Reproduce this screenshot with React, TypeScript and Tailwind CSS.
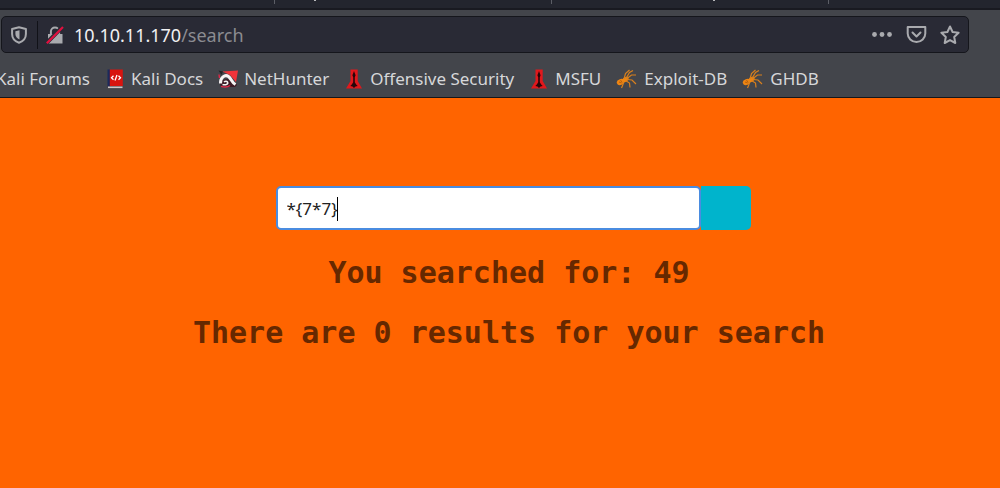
import type { ReactNode } from 'react';

function DocsIcon() {
  return (
    <svg className="h-5 w-5 shrink-0" viewBox="0 0 20 20" aria-hidden="true">
      <path d="M2.500 0.500h2.500v17h-2.500z" fill="#1b2a5c" />
      <path d="M4.800 0.500h13V17h-13z" fill="#d8140f" />
      <path d="M3 17.500h14.500v1.600H3z" fill="#cfc4c4" />
      <path d="M8.500 6.800 6.500 8.800l2 2M13.500 6.800l2 2-2 2M12 6 10 11.500" fill="none" stroke="#fff" strokeWidth="1.300" />
    </svg>
  );
}

function NetHunterIcon() {
  return (
    <svg className="h-5 w-5 shrink-0" viewBox="0 0 20 20" aria-hidden="true">
      <path d="M0.500 1.500 5 2.500 3.500 6z" fill="#222327" />
      <path d="M1 12 3 18h14l2-2-3-4-7-2z" fill="#3b1b24" />
      <path d="M4.500 2.500 20 1.500 18 13 12 6z" fill="#f0343a" />
      <path d="M2.500 14.500C2 8.500 7 5 10.500 7.500c3 2.300 3 6 7 8" fill="none" stroke="#f7f4f4" strokeWidth="3" />
      <path d="M4.500 15.500c3.500 1 6-.5 5-2.500-.8-1.300-2.500-1-3.500 0" fill="none" stroke="#f7f4f4" strokeWidth="1.500" />
      <path d="M3 17.300c3 1 7 .7 9-.8M1 5.500 1.500 9" fill="none" stroke="#e02848" strokeWidth="1.400" />
    </svg>
  );
}

function OffsecIcon() {
  return (
    <svg className="h-5 w-5 shrink-0" viewBox="0 0 20 20" aria-hidden="true">
      <path d="M6.500 0.500h7.200v11.500L18 19.500H2l4.500-7.500z" fill="#e0181c" />
      <path d="M10 2 10.700 4l.9 2.200-.8 2v5l1.400 2.300 1.500 1.500-2.200.5L10 19l-1.500-1.500-2.200-.5 1.500-1.500 1.400-2.300v-5l-.8-2L9.300 4z" fill="#260609" />
    </svg>
  );
}

function AntIcon() {
  return (
    <svg className="h-5 w-[22px] shrink-0" viewBox="0 0 22 20" aria-hidden="true">
      <g fill="#ee8512">
        <ellipse cx="4.700" cy="13" rx="4" ry="3" transform="rotate(-18 4.700 13)" />
        <ellipse cx="9.500" cy="10.500" rx="3.300" ry="2.200" transform="rotate(-30 9.500 10.500)" />
      </g>
      <path d="M8 10 9.500 4.500l4-3.500M10 9.500l3.500-6L17 1.500M11 9.500l4.500-3.500 4.500 0M11 10.500l5 .5 4 4M9.500 11.500l4 2.500 .5 4.500M7 12.500v3l-1.500 3.500" fill="none" stroke="#d9801d" strokeWidth="1.200" />
      <path d="M3 13l2.500 1M4.500 11l1.500 2.500" stroke="#9c4d0b" strokeWidth=".7" />
    </svg>
  );
}

function Bookmark({ icon, children }: { icon?: ReactNode; children: ReactNode }) {
  return (
    <a href="#" className="flex shrink-0 items-center gap-[6px] whitespace-nowrap">
      {icon}
      {children}
    </a>
  );
}

function TabStrip() {
  return (
    <div className="flex h-[10px] items-start overflow-hidden border-b-2 border-[#191a21] bg-[#23252e]">
      <div className="h-1 w-[275px] shrink-0 border-r border-[#5c5e66]" />
      <div className="h-1 w-[277px] shrink-0 border-r border-[#5c5e66] pl-[39px]">
        <div className="h-px w-[2px] bg-[#b8b9bb]" />
      </div>
      <div className="h-1 w-[277px] shrink-0 border-r border-[#5c5e66] pl-[161px]">
        <div className="h-px w-[2px] bg-[#b8b9bb]" />
      </div>
    </div>
  );
}

function AddressBar() {
  return (
    <div className="mr-[31px] flex h-[37px] items-center rounded-[5px] border border-[#15161c] bg-[#292a35] text-[#a9aaae]">
      <button type="button" aria-label="Tracking protection" className="ml-2">
        <svg className="h-[18px] w-[18px]" viewBox="0 0 18 18" aria-hidden="true">
          <path d="M9 1.300 15.900 3v5c0 4-2.500 7.200-6.900 8.700C4.600 15.200 2.100 12 2.100 8V3z" fill="none" stroke="currentColor" strokeWidth="2" strokeLinejoin="round" />
          <path d="M9.500 4.300v9.300C7 12.500 5.400 10.500 5.400 8V5.200z" fill="currentColor" />
        </svg>
      </button>
      <span className="ml-[9px] h-7 w-px bg-[#111218]" />
      <button type="button" aria-label="Connection is not secure" className="ml-2">
        <svg className="h-[18px] w-[18px]" viewBox="0 0 18 18" aria-hidden="true">
          <path d="M4.900 9V5.500a4.100 4.100 0 0 1 8.200 0V9" fill="none" stroke="currentColor" strokeWidth="2" />
          <path d="M2 8h14.500v9.500H2z" fill="currentColor" />
          <path d="M.8 16.800 16.500.8" stroke="#292a35" strokeWidth="4" />
          <path d="M.8 17.200 17 1" stroke="#e2103f" strokeWidth="2.200" />
        </svg>
      </button>
      <div
        role="textbox"
        aria-label="Address"
        contentEditable
        suppressContentEditableWarning
        className="ml-[10px] min-w-0 flex-1 whitespace-nowrap text-[18px] leading-6 text-[#8b8c91] outline-none"
      >
        <span className="text-[#f0f0f2]">10.10.11.170</span>/search
      </div>
      <div className="mr-2 flex items-center gap-[13px]">
        <button type="button" aria-label="Page actions">
          <svg className="h-5 w-[22px]" viewBox="0 0 22 20" fill="currentColor" aria-hidden="true">
            <circle cx="3.500" cy="9.500" r="2.400" />
            <circle cx="11" cy="9.500" r="2.400" />
            <circle cx="18.500" cy="9.500" r="2.400" />
          </svg>
        </button>
        <button type="button" aria-label="Save to Pocket">
          <svg className="h-5 w-[21px]" viewBox="0 0 21 20" fill="none" stroke="currentColor" strokeWidth="2" strokeLinecap="round" strokeLinejoin="round" aria-hidden="true">
            <path d="M1.700 2h17.600v6.500a8.800 8.500 0 0 1-17.600 0z" />
            <path d="m6.500 7.500 4 4 4-4" />
          </svg>
        </button>
        <button type="button" aria-label="Bookmark this page">
          <svg className="h-5 w-5" viewBox="0 0 20 20" fill="none" stroke="currentColor" strokeWidth="2" strokeLinejoin="round" aria-hidden="true">
            <path d="m10 1.500 2.600 5.500 6 .8-4.400 4.200 1.100 6-5.300-2.900L4.700 18l1.100-6L1.400 7.800l6-.8z" />
          </svg>
        </button>
      </div>
    </div>
  );
}

export default function App() {
  return (
    <div className="flex min-h-screen flex-col overflow-hidden bg-[#ff6400] font-['Noto_Sans',sans-serif]">
      <header className="border-b border-[#15161a] bg-[#43454b]">
        <TabStrip />
        <div className="pl-px pt-[6px]">
          <AddressBar />
        </div>
        <nav aria-label="Bookmarks" className="-ml-1 flex h-11 items-center gap-[15px] pt-[7px] text-[17px] leading-6 text-[#d6d7d9]">
          <Bookmark>Kali Forums</Bookmark>
          <Bookmark icon={<DocsIcon />}>Kali Docs</Bookmark>
          <Bookmark icon={<NetHunterIcon />}>NetHunter</Bookmark>
          <Bookmark icon={<OffsecIcon />}>Offensive Security</Bookmark>
          <Bookmark icon={<OffsecIcon />}>MSFU</Bookmark>
          <Bookmark icon={<AntIcon />}>Exploit-DB</Bookmark>
          <Bookmark icon={<AntIcon />}>GHDB</Bookmark>
        </nav>
      </header>
      <main className="flex flex-1 flex-col items-center pl-[18px] pt-[88px]">
        <form className="ml-2 flex h-11 w-full max-w-[475px]" onSubmit={(e) => e.preventDefault()}>
          <div className="relative flex-1">
            <input
              type="text"
              aria-label="Search"
              defaultValue="*{7*7}"
              className="h-full w-full rounded-[5px] border-2 border-[#4a8ce0] bg-white pl-[9px] text-[17px] text-[#222] caret-transparent outline-none"
            />
            <span className="absolute left-[61px] top-[11px] h-6 w-px bg-black" />
          </div>
          <button type="submit" aria-label="Submit search" className="w-[50px] rounded-r-[5px] bg-[#00b4cc]" />
        </form>
        <div className="flex flex-col gap-6 pt-[25px] text-center font-['DejaVu_Sans_Mono',monospace] text-[30px] font-bold leading-9 text-[#662800]">
          <h1>You searched for: 49</h1>
          <h1>There are 0 results for your search</h1>
        </div>
      </main>
    </div>
  );
}
